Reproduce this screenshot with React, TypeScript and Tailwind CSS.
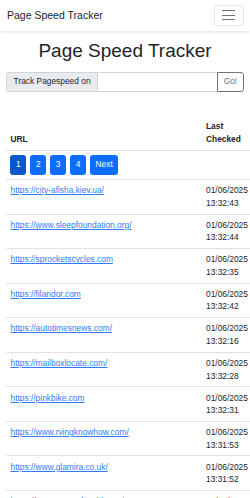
import React from 'react';

const rows = [
  { url: 'https://city-afisha.kiev.ua/', time: '13:32:43' },
  { url: 'https://www.sleepfoundation.org/', time: '13:32:44' },
  { url: 'https://sprocketscycles.com', time: '13:32:35' },
  { url: 'https://filandor.com', time: '13:32:42' },
  { url: 'https://autotimesnews.com/', time: '13:32:16' },
  { url: 'https://mailboxlocate.com/', time: '13:32:28' },
  { url: 'https://pinkbike.com', time: '13:32:31' },
  { url: 'https://www.rvingknowhow.com/', time: '13:31:53' },
  { url: 'https://www.glamira.co.uk/', time: '13:31:52' },
  { url: 'https://www.mapsofworld.com/', time: '13:31:50' },
];

const pages = ['1', '2', '3', '4', 'Next'];

export default function App() {
  return (
    <div className="w-[250px] h-[498px] overflow-hidden bg-white text-[#212529] font-['Liberation_Sans',Arial,sans-serif] text-[8.4px] leading-[12.6px]">
      {/* Navbar */}
      <nav className="flex items-center justify-between h-[30.5px] pl-[7px] pr-[6.5px] bg-white shadow-[0_1px_3px_rgba(0,0,0,0.12)] relative">
        <span className="text-[10.5px] leading-[15px] text-[#212529]">Page Speed Tracker</span>
        <button className="w-[30px] h-[21px] rounded-[3px] border border-[rgba(0,0,0,0.1)] flex flex-col items-center justify-center gap-[3.3px]">
          <span className="block w-[13px] h-[1.2px] bg-[#6f7275]" />
          <span className="block w-[13px] h-[1.2px] bg-[#6f7275]" />
          <span className="block w-[13px] h-[1.2px] bg-[#6f7275]" />
        </button>
      </nav>

      <div className="px-[6.3px]">
        <h1 className="text-center text-[19px] leading-[23px] mt-[8px] mb-[10px]">Page Speed Tracker</h1>

        {/* Input group */}
        <div className="flex h-[20.5px] w-[237.4px]">
          <span className="flex items-center px-[6.3px] bg-[#e9ecef] border border-[#ced4da] rounded-l-[3px] whitespace-nowrap">
            Track Pagespeed on
          </span>
          <div className="flex-1 border-y border-[#ced4da] bg-white" />
          <button className="px-[5.5px] border border-[#6c757d] rounded-r-[3px] text-[#6c757d]">Go!</button>
        </div>

        {/* Table */}
        <table className="mt-[24px] w-[246px] table-fixed border-collapse">
          <colgroup>
            <col className="w-[195.5px]" />
            <col className="w-[50.5px]" />
          </colgroup>
          <thead>
            <tr className="border-b border-[#dee2e6]">
              <th className="text-left align-bottom font-bold p-[4.2px]">URL</th>
              <th className="text-left align-bottom font-bold p-[4.2px]">Last Checked</th>
            </tr>
          </thead>
          <tbody>
            <tr className="border-b border-[#dee2e6]">
              <td colSpan={2} className="p-[4.2px]">
                <div className="flex gap-[4px]">
                  {pages.map((p, i) => (
                    <span
                      key={p}
                      className={`h-[20px] px-[5.6px] flex items-center rounded-[3px] text-white ${i === 0 ? 'bg-[#0a58ca]' : 'bg-[#0d6efd]'}`}
                    >
                      {p}
                    </span>
                  ))}
                </div>
              </td>
            </tr>
            {rows.map((r) => (
              <tr key={r.url} className="border-b border-[#dee2e6]">
                <td className="align-top p-[4.2px]">
                  <a href="#" className="text-[#2f7df6] underline">{r.url}</a>
                </td>
                <td className="align-top p-[4.2px] whitespace-nowrap">
                  01/06/2025
                  <br />
                  {r.time}
                </td>
              </tr>
            ))}
          </tbody>
        </table>
      </div>
    </div>
  );
}
